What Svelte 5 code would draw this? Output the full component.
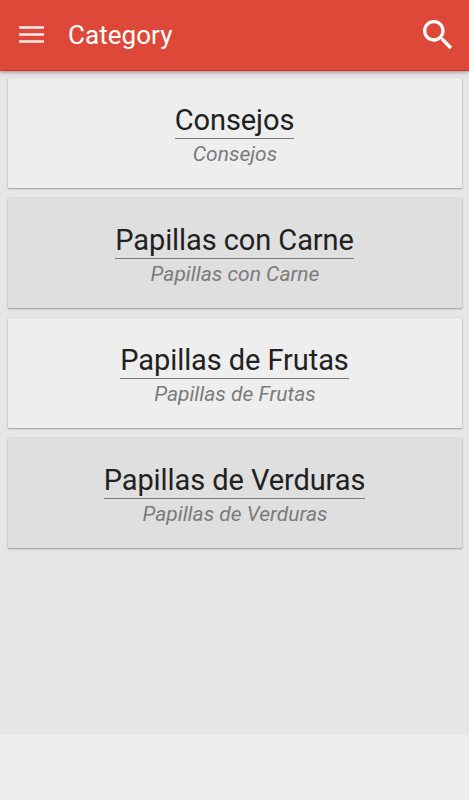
<script lang="ts">
	type Category = { id: number; name: string; description: string };

	const categories: Category[] = [
		{ id: 1, name: "Consejos", description: "Consejos" },
		{ id: 2, name: "Papillas con Carne", description: "Papillas con Carne" },
		{ id: 3, name: "Papillas de Frutas", description: "Papillas de Frutas" },
		{ id: 4, name: "Papillas de Verduras", description: "Papillas de Verduras" },
	];
</script>

<div class="screen">
	<header>
		<button aria-label="Menu">
			<svg width="26" height="20" viewBox="0 0 26 20">
				<path d="M1 2.5h25M1 9.5h25M1 16.5h25" stroke="#fff" stroke-width="2.6" opacity="0.9" />
			</svg>
		</button>
		<h1>Category</h1>
		<button aria-label="Search">
			<svg width="40" height="40" viewBox="0 0 24 24">
				<path
					fill="#fff"
					d="M15.5 14h-.79l-.28-.27C15.41 12.59 16 11.11 16 9.5 16 5.91 13.09 3 9.5 3S3 5.91 3 9.5 5.91 16 9.5 16c1.61 0 3.09-.59 4.23-1.57l.27.28v.79l5 4.99L20.49 19l-4.99-5zm-6 0C7.01 14 5 11.99 5 9.5S7.01 5 9.5 5 14 7.01 14 9.5 11.99 14 9.5 14z"
				/>
			</svg>
		</button>
	</header>

	<main>
		{#each categories as category (category.id)}
			<article>
				<h2>{category.name}</h2>
				<p>{category.description}</p>
			</article>
		{/each}
	</main>
</div>

<style>
	:global(body) {
		margin: 0;
		background: #eee;
	}
	.screen {
		display: flex;
		flex-direction: column;
		height: 735px;
		background: #e6e6e6;
		font-family: Roboto, sans-serif;
	}

	header {
		box-sizing: border-box;
		display: flex;
		align-items: center;
		height: 71px;
		padding: 0 11px 0 18px;
		background: #dd4839;
		border-bottom: 1px solid #dc3320;
		box-shadow: 0 1px 4px rgba(0, 0, 0, 0.4);
	}
	h1 {
		flex: 1;
		margin: 0 0 0 24px;
		color: #fff;
		font-size: 26px;
		font-weight: 400;
		letter-spacing: 0.05px;
		line-height: 32px;
	}
	button {
		display: flex;
		padding: 0;
		border: 0;
		background: none;
	}

	main {
		display: flex;
		flex-direction: column;
		gap: 9.8px;
		padding: 7.4px 7px 0 8px;
	}
	article {
		box-sizing: border-box;
		display: flex;
		flex-direction: column;
		align-items: center;
		height: 110px;
		padding-top: 24px;
		border-radius: 1px;
		background: #eee;
		box-shadow:
			0 0 1px rgba(0, 0, 0, 0.25),
			0 1px 2px rgba(0, 0, 0, 0.3);
	}
	article:nth-child(even) {
		background: #dfdfdf;
	}
	h2 {
		margin: 0 1px 0 0;
		border-bottom: 1px solid #777;
		color: #212121;
		font-size: 29px;
		font-weight: 400;
		letter-spacing: -0.08px;
		line-height: 36px;
	}
	p {
		margin: 0;
		color: #7b7b7b;
		font-size: 21px;
		font-style: italic;
		line-height: 30px;
	}
</style>
